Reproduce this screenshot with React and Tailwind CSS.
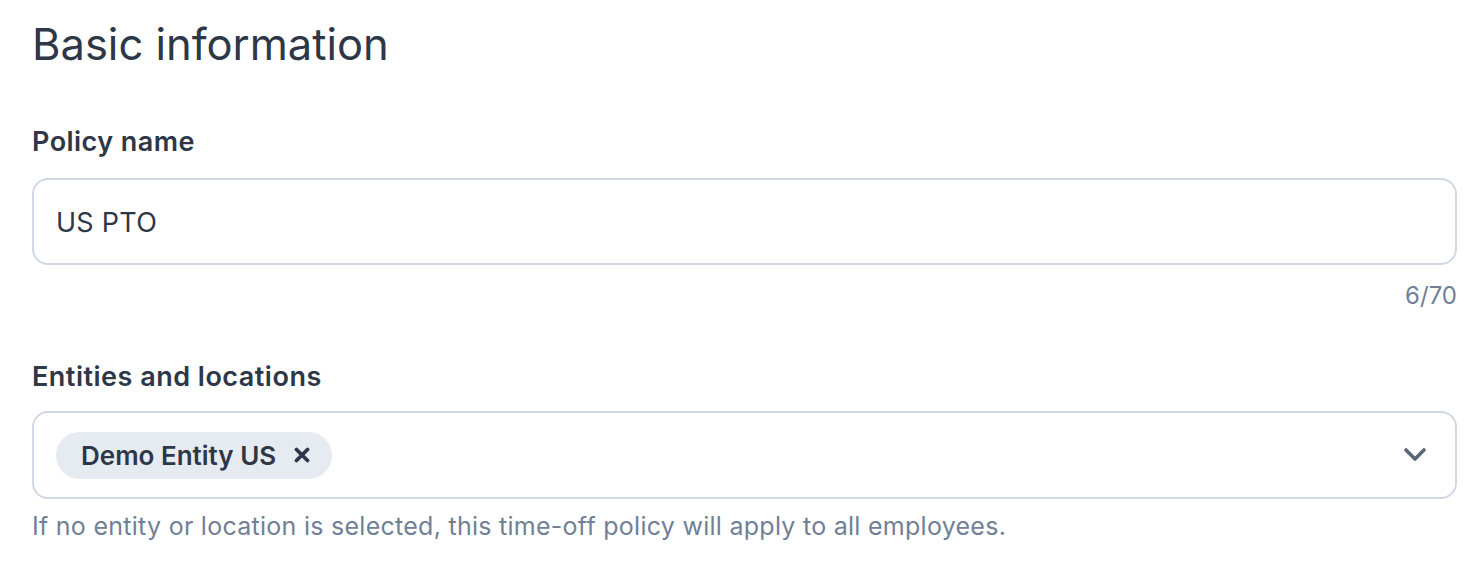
import React from "react";

export default function App() {
  return (
    <div className="w-[1476px] h-[576px] bg-white px-8 pt-[14px] text-[#2d3748]" style={{ fontFamily: "Inter, 'Noto Sans', sans-serif" }}>
      <h1 className="text-[43.5px] leading-[60px] font-normal text-[#2d3748]">Basic information</h1>

      <div className="mt-[52px]">
        <label className="block text-[27px] leading-[32px] font-semibold tracking-[0.45px] text-[#2d3748]">Policy name</label>
        <div className="mt-[20px] h-[87px] w-[1425px] rounded-[16px] border-2 border-[#cfd8e3] flex items-center px-[22px] pt-[3px]">
          <span className="text-[27px] tracking-[0.25px] text-[#2d3748]">US PTO</span>
        </div>
        <div className="mt-[16px] w-[1425px] text-right text-[24px] leading-[30px] text-[#718096]">6/70</div>
      </div>

      <div className="mt-[50px]">
        <label className="block text-[27px] leading-[32px] font-semibold tracking-[0.5px] text-[#2d3748]">Entities and locations</label>
        <div className="mt-[18px] h-[88px] w-[1425px] rounded-[16px] border-2 border-[#cfd8e3] flex items-center justify-between pl-[22px] pr-[28px]">
          <div className="flex items-center h-[47px] rounded-full bg-[#e6ebf2] pl-[25px] pr-[22px]">
            <span className="text-[26px] font-semibold text-[#2d3748]">Demo Entity US</span>
            <svg className="ml-[18px]" width="16" height="16" viewBox="0 0 16 16">
              <path d="M2.5 2.5 L13.5 13.5 M13.5 2.5 L2.5 13.5" stroke="#2d3748" strokeWidth="3.8" strokeLinecap="round" />
            </svg>
          </div>
          <svg width="24" height="16" viewBox="0 0 24 16">
            <path d="M3 3 L12 12 L21 3" fill="none" stroke="#5a6678" strokeWidth="3.6" strokeLinecap="round" strokeLinejoin="round" />
          </svg>
        </div>
        <p className="mt-[12px] text-[25px] leading-[30px] tracking-[0.27px] text-[#718096]">If no entity or location is selected, this time-off policy will apply to all employees.</p>
      </div>
    </div>
  );
}
